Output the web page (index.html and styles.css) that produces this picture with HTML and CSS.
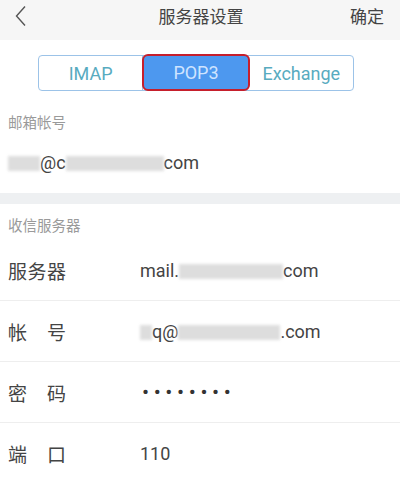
FILE: index.html
```html
<!DOCTYPE html>
<html lang="zh-CN">
<head>
<meta charset="utf-8">
<link rel="stylesheet" href="styles.css">
</head>
<body>
<div class="page">
  <header class="topbar">
    <span class="back">
      <svg width="14" height="22" viewBox="0 0 14 22"><path d="M11 1.5 L2.5 11 L11 20.5" fill="none" stroke="#555" stroke-width="1.4"/></svg>
    </span>
    <span class="title">服务器设置</span>
    <span class="ok">确定</span>
  </header>

  <div class="seg-wrap">
    <div class="seg">
      <div class="seg-item">IMAP</div>
      <div class="seg-item active">POP3</div>
      <div class="seg-item">Exchange</div>
    </div>
  </div>

  <section class="account">
    <div class="sub-label">邮箱帐号</div>
    <div class="acc-value"><span class="blur w32"></span>@c<span class="blur w98"></span>com</div>
  </section>

  <div class="band"></div>

  <section class="incoming">
    <div class="sub-label title2">收信服务器</div>
    <div class="row">
      <div class="label"><span>服</span><span>务</span><span>器</span></div>
      <div class="value">mail.<span class="blur w106"></span>com</div>
    </div>
    <div class="row">
      <div class="label"><span>帐</span><span>号</span></div>
      <div class="value"><span class="blur w12"></span>q@<span class="blur w104"></span>.com</div>
    </div>
    <div class="row">
      <div class="label"><span>密</span><span>码</span></div>
      <div class="value dots">••••••••</div>
    </div>
    <div class="row last">
      <div class="label"><span>端</span><span>口</span></div>
      <div class="value">110</div>
    </div>
  </section>
</div>
</body>
</html>
```

FILE: styles.css
```css
html, body {
  margin: 0;
  padding: 0;
  background: #fff;
}
body {
  font-family: "Roboto", "Noto Sans CJK SC", sans-serif;
  color: #333;
  width: 400px;
  height: 483px;
  overflow: hidden;
}
.topbar {
  height: 40px;
  background: #f6f6f6;
  display: flex;
  align-items: flex-start;
  padding: 0 16px 0 14px;
  box-sizing: border-box;
  position: relative;
}
.back {
  height: 32px;
  display: flex;
  align-items: center;
}
.title {
  position: absolute;
  left: 0;
  right: 0;
  top: 0;
  text-align: center;
  line-height: 32px;
  font-size: 17px;
  color: #444;
  font-family: "Noto Sans CJK SC", sans-serif;
  padding-left: 2px;
}
.ok {
  margin-left: auto;
  line-height: 32px;
  font-size: 17px;
  color: #444;
  font-family: "Noto Sans CJK SC", sans-serif;
}
.seg-wrap {
  padding-top: 15px;
  padding-left: 38px;
}
.seg {
  width: 316px;
  height: 36px;
  box-sizing: border-box;
  border: 1.5px solid #9cc3e8;
  border-radius: 4px;
  display: flex;
}
.seg-item {
  flex: 1;
  display: flex;
  align-items: center;
  justify-content: center;
  font-size: 18px;
  color: #58abbf;
  border-right: 1.5px solid #9cc3e8;
}
.seg-item:last-child {
  border-right: none;
}
.seg-item.active {
  background: #4d98ef;
  color: #cfe4ff;
  border: 2px solid #c61f2c;
  border-radius: 6px;
  margin: -2.5px 0 -1px -1px;
}
.sub-label {
  font-family: "Noto Sans CJK SC", sans-serif;
  font-size: 14.5px;
  line-height: 20px;
  color: #9a9a9a;
  padding-left: 8px;
}
.account {
  padding-top: 21px;
  padding-bottom: 20px;
}
.acc-value {
  margin-top: 21px;
  padding-left: 8px;
  line-height: 20px;
  font-size: 18px;
  color: #444;
}
.blur {
  display: inline-block;
  height: 15px;
  background: #d8d8d8;
  vertical-align: -2px;
  filter: blur(1.5px);
  opacity: 0.85;
}
.w32 { width: 32px; }
.w98 { width: 98px; }
.w106 { width: 104px; }
.w12 { width: 12px; }
.w104 { width: 102px; }
.band {
  height: 11px;
  background: #eef0f2;
}
.title2 {
  padding-top: 13px;
  padding-bottom: 7px;
  line-height: 16px;
}
.row {
  height: 60px;
  border-bottom: 1px solid #eeeeee;
  display: flex;
  align-items: center;
  padding-left: 8px;
}
.row.last {
  border-bottom: none;
  height: 61px;
}
.label {
  width: 58px;
  display: flex;
  justify-content: space-between;
  font-family: "Noto Sans CJK SC", sans-serif;
  font-size: 19px;
  color: #444;
  margin-right: 74px;
}
.value {
  font-size: 18px;
  color: #444;
}
.dots {
  letter-spacing: 4.6px;
  font-size: 21px;
  color: #333;
  padding-left: 2px;
}
```
